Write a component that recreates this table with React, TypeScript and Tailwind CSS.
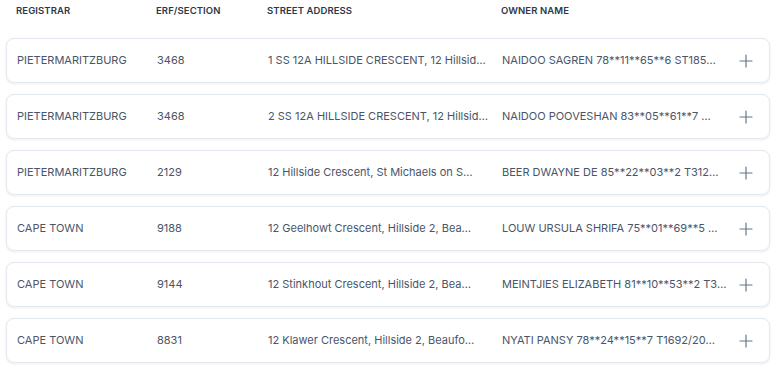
import React from "react";

const rows = [
  ["PIETERMARITZBURG", "3468", "1 SS 12A HILLSIDE CRESCENT, 12 Hillsid…", "NAIDOO SAGREN 78**11**65**6 ST185…"],
  ["PIETERMARITZBURG", "3468", "2 SS 12A HILLSIDE CRESCENT, 12 Hillsid…", "NAIDOO POOVESHAN 83**05**61**7 …"],
  ["PIETERMARITZBURG", "2129", "12 Hillside Crescent, St Michaels on S…", "BEER DWAYNE DE 85**22**03**2 T312…"],
  ["CAPE TOWN", "9188", "12 Geelhowt Crescent, Hillside 2, Bea…", "LOUW URSULA SHRIFA 75**01**69**5 …"],
  ["CAPE TOWN", "9144", "12 Stinkhout Crescent, Hillside 2, Bea…", "MEINTJIES ELIZABETH 81**10**53**2 T3…"],
  ["CAPE TOWN", "8831", "12 Klawer Crescent, Hillside 2, Beaufo…", "NYATI PANSY 78**24**15**7 T1692/20…"],
];

function Plus() {
  return (
    <svg width="14" height="14" viewBox="0 0 14 14" fill="none" stroke="#64748b" strokeWidth="1.2" strokeLinecap="round">
      <path d="M7 1v12M1 7h12" />
    </svg>
  );
}

export default function App() {
  return (
    <div className="w-[776px] h-[368px] bg-white px-[6px] overflow-hidden" style={{ fontFamily: "Inter, 'Noto Sans', sans-serif" }}>
      <div className="grid grid-cols-[140px_111px_234px_minmax(0,1fr)_46px] h-[23px] items-center pl-[10px] text-[9.5px] font-semibold text-[#2d3748] tracking-[0.01em]">
        <div>REGISTRAR</div>
        <div>ERF/SECTION</div>
        <div>STREET ADDRESS</div>
        <div>OWNER NAME</div>
        <div></div>
      </div>
      <div className="mt-[15px] flex flex-col gap-[11px]">
        {rows.map((r, i) => (
          <div
            key={i}
            className="grid grid-cols-[140px_111px_234px_minmax(0,1fr)_46px] items-center h-[45px] pl-[10px] rounded-[8px] border border-[#e2e8f0] bg-white shadow-[0_1px_3px_rgba(15,23,42,0.08)] text-[11px] text-[#4a5568]"
          >
            <div className="whitespace-nowrap">{r[0]}</div>
            <div className="whitespace-nowrap">{r[1]}</div>
            <div className="whitespace-nowrap">{r[2]}</div>
            <div className="whitespace-nowrap">{r[3]}</div>
            <div className="flex justify-center">
              <Plus />
            </div>
          </div>
        ))}
      </div>
    </div>
  );
}
